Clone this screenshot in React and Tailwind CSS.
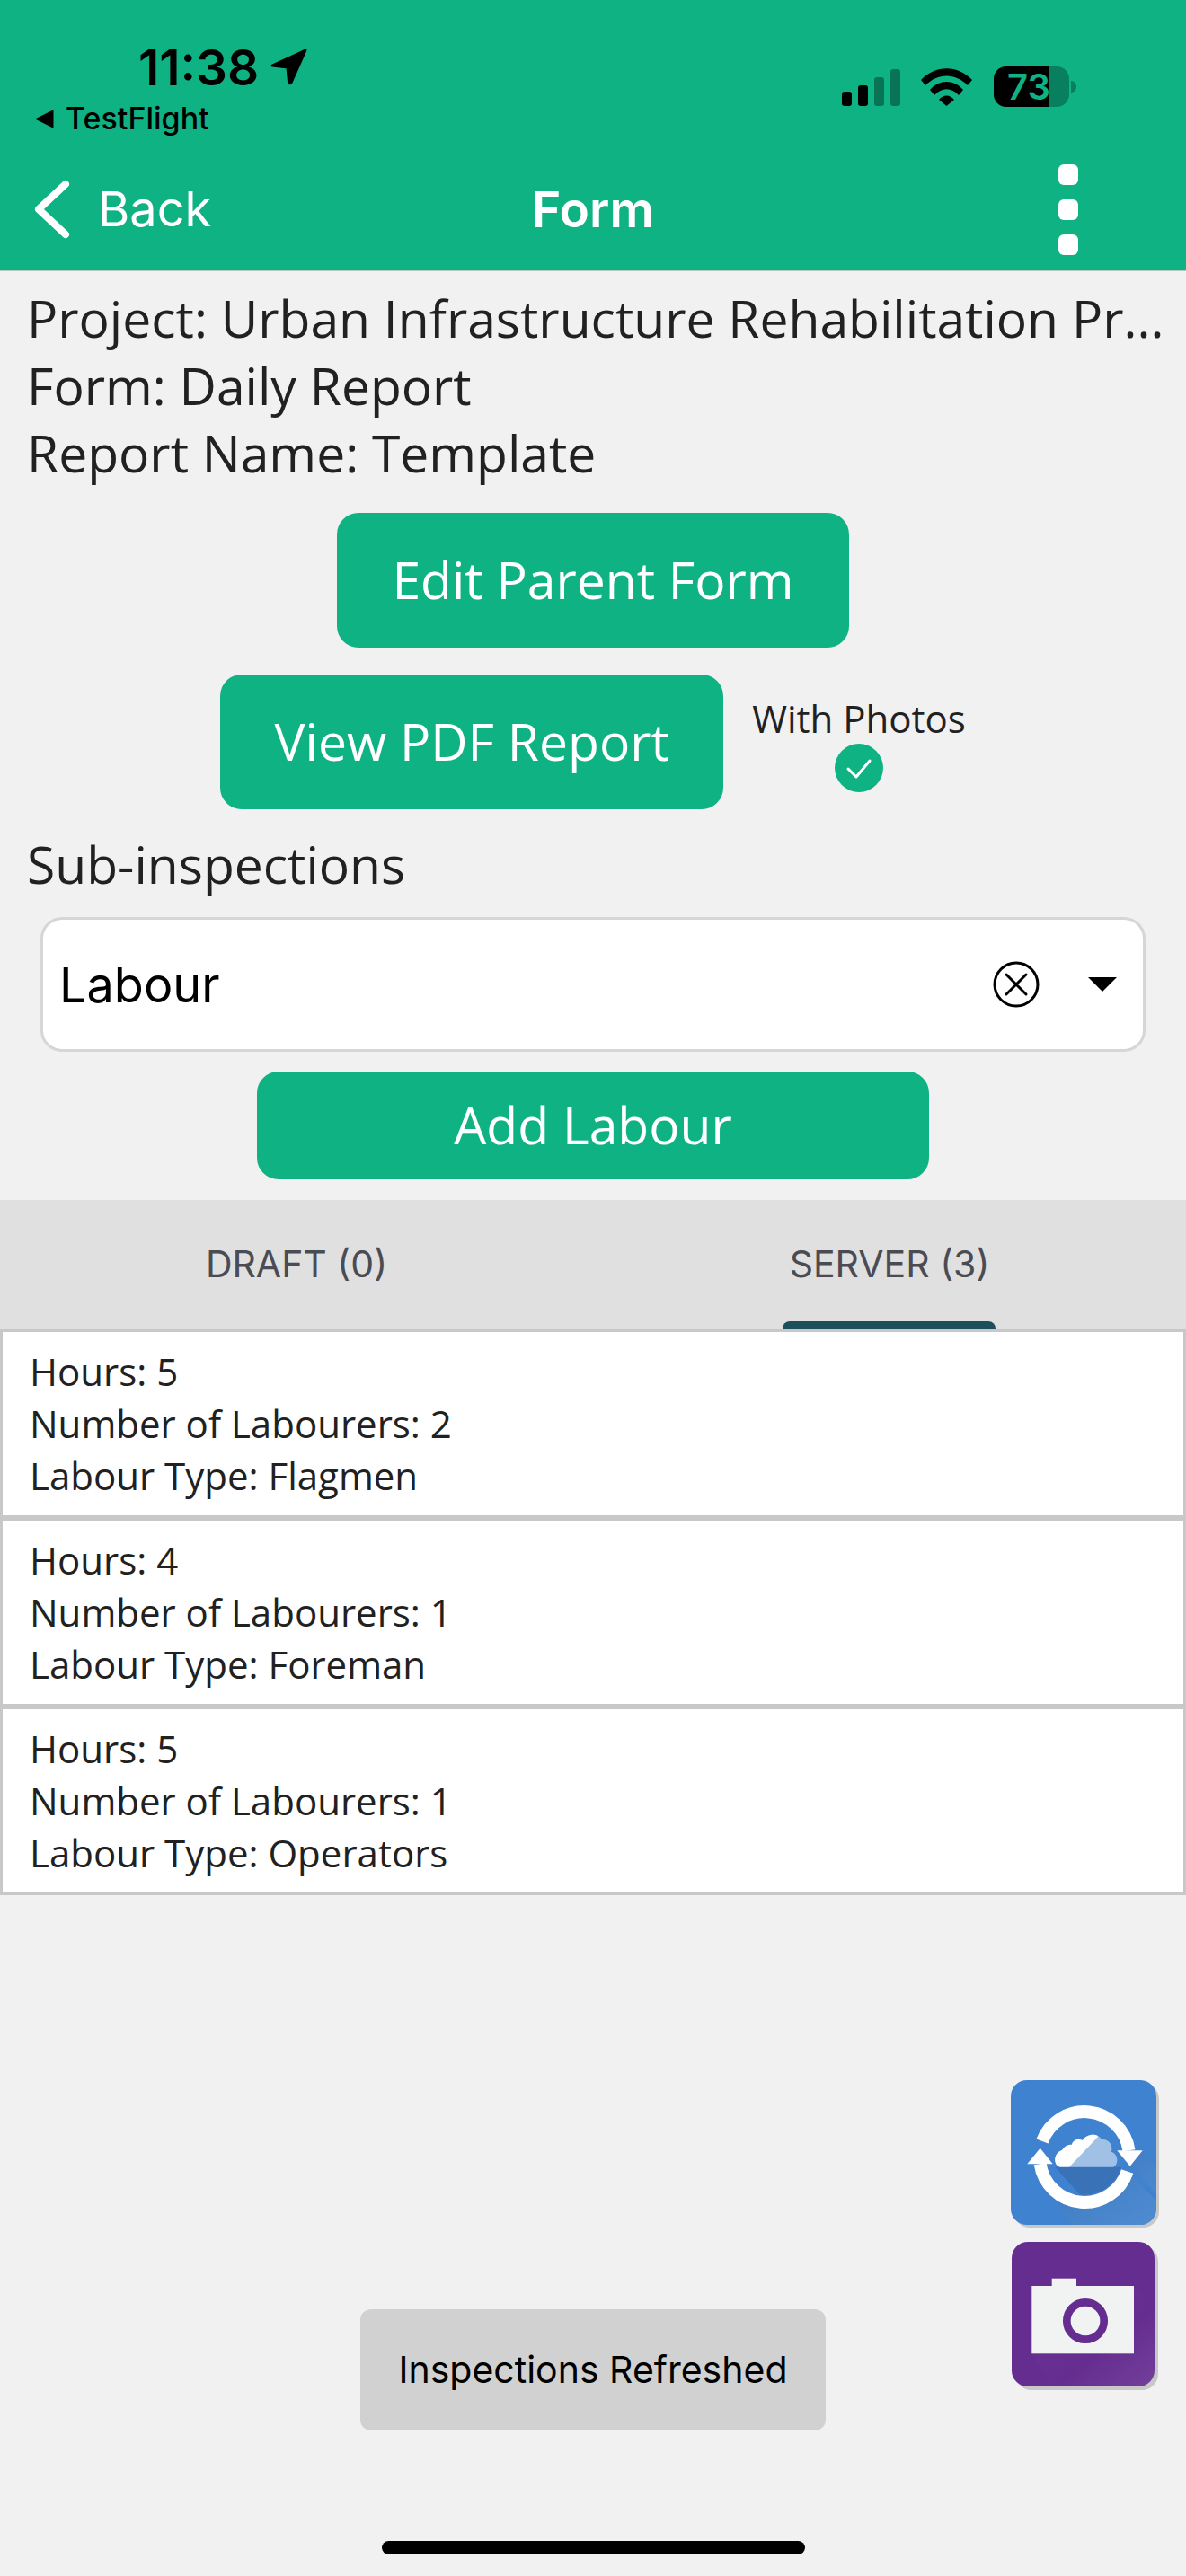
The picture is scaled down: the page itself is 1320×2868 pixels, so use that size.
const openSans = { fontFamily: '"Open Sans", sans-serif' };

const labourEntries = [
  { hours: 5, count: 2, type: 'Flagmen' },
  { hours: 4, count: 1, type: 'Foreman' },
  { hours: 5, count: 1, type: 'Operators' },
];

function SyncTile() {
  return (
    <div className="w-[162px] h-[161px] rounded-[18px] bg-[#3F82D0] shadow-[3px_3px_0_#c8c8c8] overflow-hidden">
      <svg width="162" height="161" viewBox="0 0 162 161">
        <defs>
          <clipPath id="cloudLeft">
            <polygon points="40,96.7 65,96.7 97,63 97,50 40,50" />
          </clipPath>
          <linearGradient id="blueShade" x1="0" y1="0" x2="1" y2="1">
            <stop offset="0" stopColor="#3A72B8" stopOpacity="0.75" />
            <stop offset="1" stopColor="#5590D0" stopOpacity="0.7" />
          </linearGradient>
        </defs>
        <polygon points="45,127 68,161 162,161 162,99 146.7,78 125,96 100,127" fill="url(#blueShade)" />
        <polygon points="125,95.7 162,134 162,127 132.7,95.7" fill="#3F82D0" />
        <path d="M49.3 96.7 L123 96.7 A43 43 0 0 1 76.7 127.3 Z" fill="#3A72B8" />
        <path d="M35 68 A50 50 0 0 1 131.5 78.3" fill="none" stroke="#fff" strokeWidth="14" />
        <polygon points="118.3,78.3 146.7,78.3 132.7,95.7" fill="#fff" />
        <path d="M129.7 101.5 A50 50 0 0 1 32.7 93.3" fill="none" stroke="#fff" strokeWidth="14" />
        <polygon points="18.3,93.3 46.7,93.3 32.7,75.7" fill="#fff" />
        <path
          d="M55 96.7 C47 95 47 81 57 78 C60 73 65 71 68 72 C69 66 76 65 80 67 C84 60 96 58 101 66 C109 65 114 72 112 80 C119 81 121 94 114 96.7 Z"
          fill="#A0C0E6"
        />
        <path
          d="M55 96.7 C47 95 47 81 57 78 C60 73 65 71 68 72 C69 66 76 65 80 67 C84 60 96 58 101 66 C109 65 114 72 112 80 C119 81 121 94 114 96.7 Z"
          fill="#fff"
          clipPath="url(#cloudLeft)"
        />
      </svg>
    </div>
  );
}

function CameraTile() {
  return (
    <div className="w-[159px] h-[161px] rounded-[18px] bg-[#652D90] shadow-[4px_4px_0_#c8c8c8] overflow-hidden">
      <svg width="159" height="161" viewBox="0 0 159 161">
        <defs>
          <linearGradient id="purpleShade" x1="0" y1="0" x2="1" y2="1">
            <stop offset="0" stopColor="#000" stopOpacity="0.05" />
            <stop offset="0.6" stopColor="#fff" stopOpacity="0" />
            <stop offset="1" stopColor="#fff" stopOpacity="0.09" />
          </linearGradient>
        </defs>
        <polygon points="22.3,124.3 45.7,161 159,161 159,77 136,49" fill="url(#purpleShade)" />
        <rect x="44.7" y="40.7" width="27.3" height="10" fill="#F1F3F3" />
        <rect x="22.3" y="49" width="113.7" height="75.3" fill="#F1F3F3" />
        <circle cx="82" cy="88" r="20.7" fill="#F1F3F3" stroke="#652D90" strokeWidth="8.7" />
      </svg>
    </div>
  );
}

function StatusIcons() {
  return (
    <div className="flex items-center">
      <svg width="65" height="41" viewBox="0 0 65 41" className="mt-[1px]">
        <rect x="0" y="25" width="11" height="16" rx="3" fill="#000" />
        <rect x="18" y="18" width="11" height="23" rx="3" fill="#000" />
        <rect x="36" y="9" width="11" height="32" rx="3" fill="#000" fillOpacity="0.35" />
        <rect x="54" y="0" width="11" height="41" rx="3" fill="#000" fillOpacity="0.35" />
      </svg>
      <svg width="57" height="42" viewBox="0 0 57 42" className="ml-[23px]">
        <path d="M0 13 C16 -4 41 -4 57 13 L52 19 C38 5 19 5 5 19 Z" fill="#000" />
        <path d="M10 24 C20 12 37 12 47 24 L42 30 C34 21 23 21 15 30 Z" fill="#000" />
        <path d="M20 35 C25 29 32 29 37 35 L28.5 42 Z" fill="#000" />
      </svg>
      <div className="relative ml-[24px] w-[84px] h-[45px] rounded-[14px] bg-[#087F5D]">
        <div className="h-full w-[61px] rounded-l-[14px] bg-black" />
        <span className="absolute left-[15px] top-[2px] text-[40px] leading-[41px] font-semibold text-[#0FB283] [font-family:Inter,sans-serif]">
          73
        </span>
      </div>
      <div className="ml-[2px] w-[6px] h-[13px] rounded-r-full bg-[#087F5D]" />
    </div>
  );
}

function Header() {
  return (
    <header className="h-[302px] bg-[#0FB283] border-b border-[#b9c9c4] flex flex-col [font-family:Inter,sans-serif]">
      <div className="h-[161px] flex justify-between">
        <div className="pl-[39px] pt-[47px]">
          <div className="flex items-center pl-[115px] h-[56px]">
            <span className="text-[55px] font-semibold text-black leading-none">11:38</span>
            <svg width="44" height="42" viewBox="0 0 44 42" className="ml-[12px]">
              <path d="M3 19 L40 2 L24 38 Q22 40 21.5 37 L20 21 Z" fill="#000" stroke="#000" strokeWidth="3" strokeLinejoin="round" />
            </svg>
          </div>
          <div className="flex items-center mt-[9px] h-[40px]">
            <svg width="21" height="21" viewBox="0 0 21 21">
              <path d="M1 10.5 L20 1 L20 20 Z" fill="#000" stroke="#000" strokeWidth="1" strokeLinejoin="round" />
            </svg>
            <span className="ml-[13px] text-[34px] font-medium text-black leading-none">TestFlight</span>
          </div>
        </div>
        <div className="pr-[122px] pt-[74px]">
          <StatusIcons />
        </div>
      </div>
      <div className="flex-1 grid grid-cols-[1fr_auto_1fr] items-center pt-[4px]">
        <div className="flex items-center pl-[36px]">
          <svg width="46" height="68" viewBox="0 0 46 68">
            <path d="M37 6 L7 34 L37 62" fill="none" stroke="#fff" strokeWidth="8" strokeLinecap="round" strokeLinejoin="round" />
          </svg>
          <span className="ml-[27px] text-[54px] leading-none text-white">Back</span>
        </div>
        <span className="text-[55px] leading-none font-semibold text-white">Form</span>
        <div className="flex flex-col items-end gap-[16px] pr-[120px]">
          <div className="w-[22px] h-[23px] rounded-[6px] bg-white" />
          <div className="w-[22px] h-[23px] rounded-[6px] bg-white" />
          <div className="w-[22px] h-[23px] rounded-[6px] bg-white" />
        </div>
      </div>
    </header>
  );
}

function SubInspectionSelect() {
  return (
    <div className="mx-[45px] mt-[21px] h-[150px] bg-white border-[3px] border-[#d6d6d6] rounded-[24px] flex items-center pl-[18px] [font-family:Inter,sans-serif]">
      <span className="flex-1 text-[54px] text-black">Labour</span>
      <svg width="52" height="52" viewBox="0 0 52 52">
        <circle cx="26" cy="26" r="24" fill="none" stroke="#000" strokeWidth="3" />
        <path d="M15 15 L37 37 M37 15 L15 37" stroke="#000" strokeWidth="3" strokeLinecap="round" />
      </svg>
      <svg width="32" height="16" viewBox="0 0 32 16" className="ml-[54px] mr-[29px]">
        <path d="M0 0 H32 L16 16 Z" fill="#000" />
      </svg>
    </div>
  );
}

function Tabs() {
  return (
    <div className="mt-[23px] h-[144px] bg-[#E0E0E0] grid grid-cols-2 [font-family:Inter,sans-serif]">
      <div className="flex items-center justify-center text-[41px] text-[#4B4B53]">
        DRAFT (0)
      </div>
      <div className="relative flex items-center justify-center text-[41px] text-[#4B4B53]">
        SERVER (3)
        <div className="absolute bottom-0 left-[211px] w-[237px] h-[9px] rounded-t-lg bg-[#1D4E5C]" />
      </div>
    </div>
  );
}

export default function App() {
  return (
    <div className="relative w-[1320px] h-[2868px] bg-[#F1F1F1] overflow-hidden text-[#212121]" style={openSans}>
      <Header />

      <div className="pt-[15px] px-[30px] text-[57px] leading-[75px]">
        <div className="whitespace-nowrap">Project: Urban Infrastructure Rehabilitation Pr...</div>
        <div>Form: Daily Report</div>
        <div>Report Name: Template</div>
      </div>

      <div className="flex justify-center mt-[29px]">
        <div className="w-[570px] h-[150px] rounded-[24px] bg-[#0FB283] flex items-center justify-center text-[57px] text-white">
          Edit Parent Form
        </div>
      </div>

      <div className="flex justify-center items-center gap-[32px] mt-[30px]">
        <div className="w-[560px] h-[150px] rounded-[24px] bg-[#0FB283] flex items-center justify-center text-[57px] text-white">
          View PDF Report
        </div>
        <div className="flex flex-col items-center">
          <span className="text-[42px] leading-[57px]">With Photos</span>
          <svg width="54" height="54" viewBox="0 0 54 54">
            <circle cx="27" cy="27" r="27" fill="#0FB283" />
            <path d="M15 28 L24 37 L39 19" fill="none" stroke="#fff" strokeWidth="3" strokeLinecap="round" strokeLinejoin="round" />
          </svg>
        </div>
      </div>

      <div className="mt-[24px] px-[30px] text-[57px] leading-[75px]">Sub-inspections</div>

      <SubInspectionSelect />

      <div className="flex justify-center mt-[22px]">
        <div className="w-[748px] h-[120px] rounded-[24px] bg-[#0FB283] flex items-center justify-center text-[57px] text-white">
          Add Labour
        </div>
      </div>

      <Tabs />

      <div>
        {labourEntries.map((entry, i) => (
          <div key={i} className="h-[210px] bg-white border-[3px] border-[#c8c8c8] px-[30px] py-[15px] text-[42px] leading-[58px]">
            <div>Hours: {entry.hours}</div>
            <div>Number of Labourers: {entry.count}</div>
            <div>Labour Type: {entry.type}</div>
          </div>
        ))}
      </div>

      {/* floating actions */}
      <div className="absolute left-[1125px] top-[2316px] flex flex-col items-start gap-[19px]">
        <SyncTile />
        <div className="ml-[1px]">
          <CameraTile />
        </div>
      </div>

      {/* toast */}
      <div className="absolute left-[401px] top-[2571px] w-[518px] h-[135px] rounded-[12px] bg-[#D1D1D1] flex items-center justify-center text-[41px] text-black [font-family:Inter,sans-serif]">
        Inspections Refreshed
      </div>

      {/* home indicator */}
      <div className="absolute left-[425px] top-[2829px] w-[471px] h-[15px] rounded-full bg-black" />
    </div>
  );
}
